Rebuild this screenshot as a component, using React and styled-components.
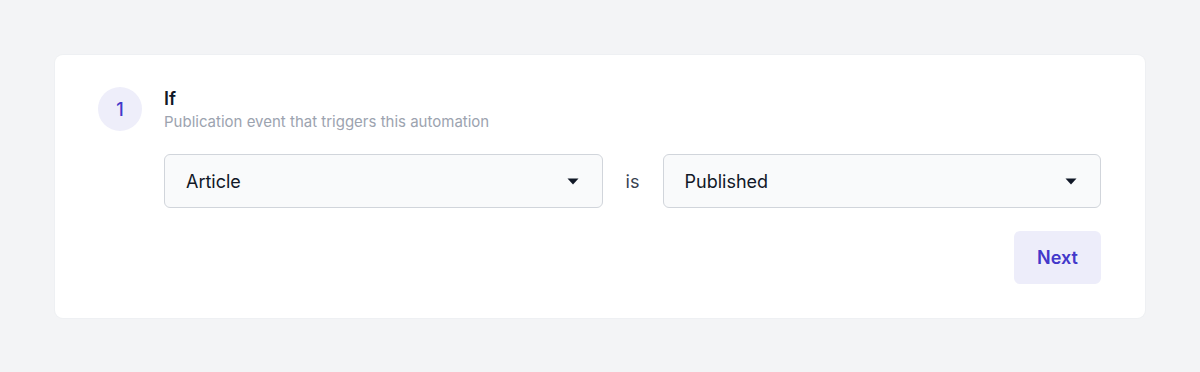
import React from 'react';
import styled, { createGlobalStyle } from 'styled-components';

const GlobalStyle = createGlobalStyle`
  body {
    margin: 0;
    background: #f3f4f6;
    font-family: Inter, "Noto Sans", sans-serif;
  }
`;

const Page = styled.div`
  padding: 55px 55px;
  height: 372px;
  box-sizing: border-box;
`;

const Card = styled.div`
  background: #ffffff;
  border-radius: 8px;
  padding: 32px 44px 34px 43px;
  display: flex;
  gap: 22px;
  box-shadow: 0 0 0 1px rgba(229, 231, 235, 0.3);
`;

const StepBadge = styled.div`
  flex: none;
  width: 44px;
  height: 44px;
  border-radius: 50%;
  background: #eeeefa;
  color: #4338ca;
  font-size: 18px;
  font-weight: 500;
  display: flex;
  align-items: center;
  justify-content: center;
`;

const Body = styled.div`
  flex: 1;
  display: flex;
  flex-direction: column;
`;

const Title = styled.div`
  font-size: 18px;
  line-height: 24px;
  font-weight: 600;
  color: #111827;
`;

const Subtitle = styled.div`
  font-size: 15px;
  line-height: 20px;
  color: #9ca3af;
  margin-top: 1px;
`;

const Row = styled.div`
  display: flex;
  align-items: center;
  gap: 22px;
  margin-top: 22px;
`;

const Select = styled.div`
  flex: 1;
  height: 54px;
  box-sizing: border-box;
  border: 1px solid #d1d5db;
  border-radius: 6px;
  background: #f9fafb;
  padding: 0 23px 0 21px;
  display: flex;
  align-items: center;
  justify-content: space-between;
  font-size: 18px;
  color: #111827;
`;

const Word = styled.span`
  font-size: 18px;
  color: #374151;
  width: 16px;
  text-align: center;
`;

const Footer = styled.div`
  display: flex;
  justify-content: flex-end;
  margin-top: 23px;
`;

const NextButton = styled.button`
  width: 87px;
  height: 53px;
  border: none;
  border-radius: 6px;
  background: #ededfa;
  color: #4338ca;
  font-family: inherit;
  font-size: 18px;
  font-weight: 600;
`;

const Caret = () => (
  <svg width="12" height="7" viewBox="0 0 12 7">
    <path d="M0.5 0.5h11L6 6.5z" fill="#111827" />
  </svg>
);

export default function App() {
  return (
    <Page>
      <GlobalStyle />
      <Card>
        <StepBadge>1</StepBadge>
        <Body>
          <Title>If</Title>
          <Subtitle>Publication event that triggers this automation</Subtitle>
          <Row>
            <Select>
              <span>Article</span>
              <Caret />
            </Select>
            <Word>is</Word>
            <Select>
              <span>Published</span>
              <Caret />
            </Select>
          </Row>
          <Footer>
            <NextButton>Next</NextButton>
          </Footer>
        </Body>
      </Card>
    </Page>
  );
}
